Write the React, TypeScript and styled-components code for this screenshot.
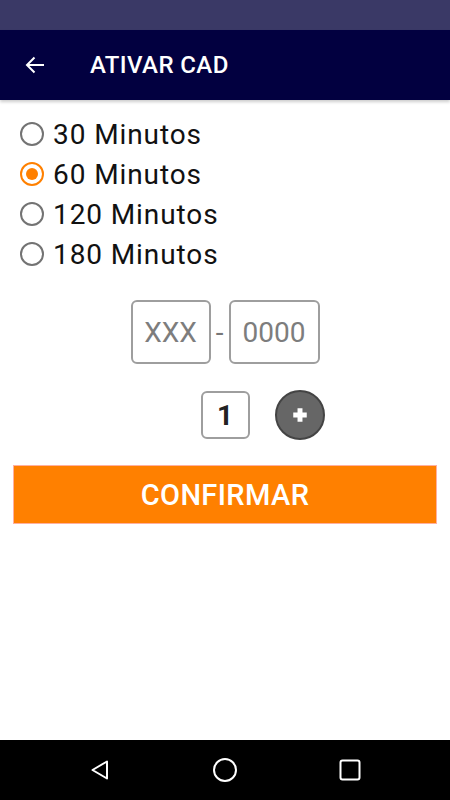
import React, { useState } from 'react'
import styled, { createGlobalStyle } from 'styled-components'

const GlobalStyle = createGlobalStyle`
  html, body {
    margin: 0;
    padding: 0;
    background: #fff;
    font-family: Roboto, "Noto Sans", sans-serif;
  }
`

const options = [30, 60, 120, 180]

const App: React.FC = () => {
  const [selected, setSelected] = useState(60)
  const [count, setCount] = useState(1)

  return (
    <Screen>
      <GlobalStyle />
      <StatusBar />
      <AppBar>
        <BackButton aria-label="Voltar">
          <svg width="20" height="18" viewBox="0 0 20 18">
            <path d="M19 9H2M9.5 1.5L2 9l7.5 7.5" fill="none" stroke="#fff" strokeWidth="2" />
          </svg>
        </BackButton>
        <Title>ATIVAR CAD</Title>
      </AppBar>

      <Content>
        <RadioGroup>
          {options.map(min => (
            <RadioRow key={min} onClick={() => setSelected(min)}>
              <RadioCircle checked={selected === min} />
              <RadioLabel>{min} Minutos</RadioLabel>
            </RadioRow>
          ))}
        </RadioGroup>

        <PlateRow>
          <PlateInput width={80} placeholder="XXX" />
          <Dash>-</Dash>
          <PlateInput width={91} placeholder="0000" />
        </PlateRow>

        <CounterRow>
          <RoundButton hidden>-</RoundButton>
          <CountBox>{count}</CountBox>
          <RoundButton onClick={() => setCount(count + 1)}>
            <svg width="18" height="18" viewBox="0 0 16 16">
              <path d="M5.8 2h4.4v3.8H14v4.4h-3.8V14H5.8v-3.8H2V5.8h3.8z" fill="#fff" />
            </svg>
          </RoundButton>
        </CounterRow>

        <ConfirmButton>CONFIRMAR</ConfirmButton>
      </Content>

      <NavBar>
        <NavCell>
          <svg width="24" height="24" viewBox="0 0 24 24">
            <path d="M19 3.5v17L4.5 12z" fill="none" stroke="#fff" strokeWidth="2" strokeLinejoin="round" />
          </svg>
        </NavCell>
        <NavCell>
          <svg width="26" height="26" viewBox="0 0 26 26">
            <circle cx="13" cy="13" r="11" fill="none" stroke="#fff" strokeWidth="2" />
          </svg>
        </NavCell>
        <NavCell>
          <svg width="22" height="22" viewBox="0 0 22 22">
            <rect x="1.5" y="1.5" width="19" height="19" rx="2" fill="none" stroke="#fff" strokeWidth="2" />
          </svg>
        </NavCell>
      </NavBar>
    </Screen>
  )
}

export default App

const Screen = styled.div`
  width: 450px;
  height: 800px;
  display: flex;
  flex-direction: column;
  background: #fff;
  overflow: hidden;
`

const StatusBar = styled.div`
  height: 30px;
  background: #3a3966;
`

const AppBar = styled.header`
  height: 70px;
  background: #020040;
  display: flex;
  align-items: center;
  box-shadow: 0 2px 3px rgba(0, 0, 0, 0.2);
  position: relative;
  z-index: 1;
`

const BackButton = styled.button`
  border: none;
  background: none;
  padding: 0;
  margin-left: 25px;
  width: 20px;
  height: 18px;
  display: flex;
`

const Title = styled.h1`
  margin: 0 0 0 45px;
  color: #fff;
  font-size: 24px;
  font-weight: 500;
  letter-spacing: 0.4px;
`

const Content = styled.main`
  flex: 1;
  display: flex;
  flex-direction: column;
  padding: 14px 13px 0;
`

const RadioGroup = styled.div`
  display: flex;
  flex-direction: column;
  padding-left: 7px;
`

const RadioRow = styled.label`
  height: 40px;
  display: flex;
  align-items: center;
  cursor: pointer;
`

const RadioCircle = styled.span<{ checked: boolean }>`
  width: 24px;
  height: 24px;
  box-sizing: border-box;
  border-radius: 50%;
  border: 2px solid ${p => (p.checked ? '#ff8000' : '#737373')};
  display: flex;
  align-items: center;
  justify-content: center;

  &::after {
    content: '';
    width: 12px;
    height: 12px;
    border-radius: 50%;
    background: #ff8000;
    display: ${p => (p.checked ? 'block' : 'none')};
  }
`

const RadioLabel = styled.span`
  margin-left: 9px;
  font-size: 28px;
  letter-spacing: 0.9px;
  color: #111;
`

const PlateRow = styled.div`
  margin-top: 26px;
  display: flex;
  justify-content: center;
  align-items: center;
`

const PlateInput = styled.input<{ width: number }>`
  width: ${p => p.width}px;
  height: 64px;
  box-sizing: border-box;
  border: 2px solid #9e9e9e;
  border-radius: 6px;
  font-family: Roboto, sans-serif;
  font-size: 28px;
  text-align: center;
  padding: 0;
  outline: none;

  &::placeholder {
    color: #7d7d7d;
  }
`

const Dash = styled.span`
  width: 18px;
  text-align: center;
  font-size: 28px;
  color: #777;
`

const CounterRow = styled.div`
  margin-top: 26px;
  display: flex;
  justify-content: center;
  align-items: center;
  gap: 25px;
`

const CountBox = styled.div`
  width: 49px;
  height: 48px;
  box-sizing: border-box;
  border: 2px solid #9e9e9e;
  border-radius: 6px;
  display: flex;
  align-items: center;
  justify-content: center;
  font-size: 28px;
  font-weight: 700;
  color: #222;
`

const RoundButton = styled.button<{ hidden?: boolean }>`
  width: 50px;
  height: 50px;
  border-radius: 50%;
  border: 2px solid #444;
  background: #666;
  display: flex;
  align-items: center;
  justify-content: center;
  padding: 0;
  visibility: ${p => (p.hidden ? 'hidden' : 'visible')};
`

const ConfirmButton = styled.button`
  margin-top: 25px;
  height: 59px;
  border: 1px solid #ffb0a0;
  background: #ff8000;
  color: #fff;
  font-family: Roboto, sans-serif;
  font-size: 29px;
  font-weight: 500;
  letter-spacing: 0.4px;
`

const NavBar = styled.nav`
  height: 60px;
  background: #000;
  display: flex;
  align-items: center;
  justify-content: center;
  gap: 75px;
`

const NavCell = styled.div`
  width: 50px;
  display: flex;
  justify-content: center;
`
